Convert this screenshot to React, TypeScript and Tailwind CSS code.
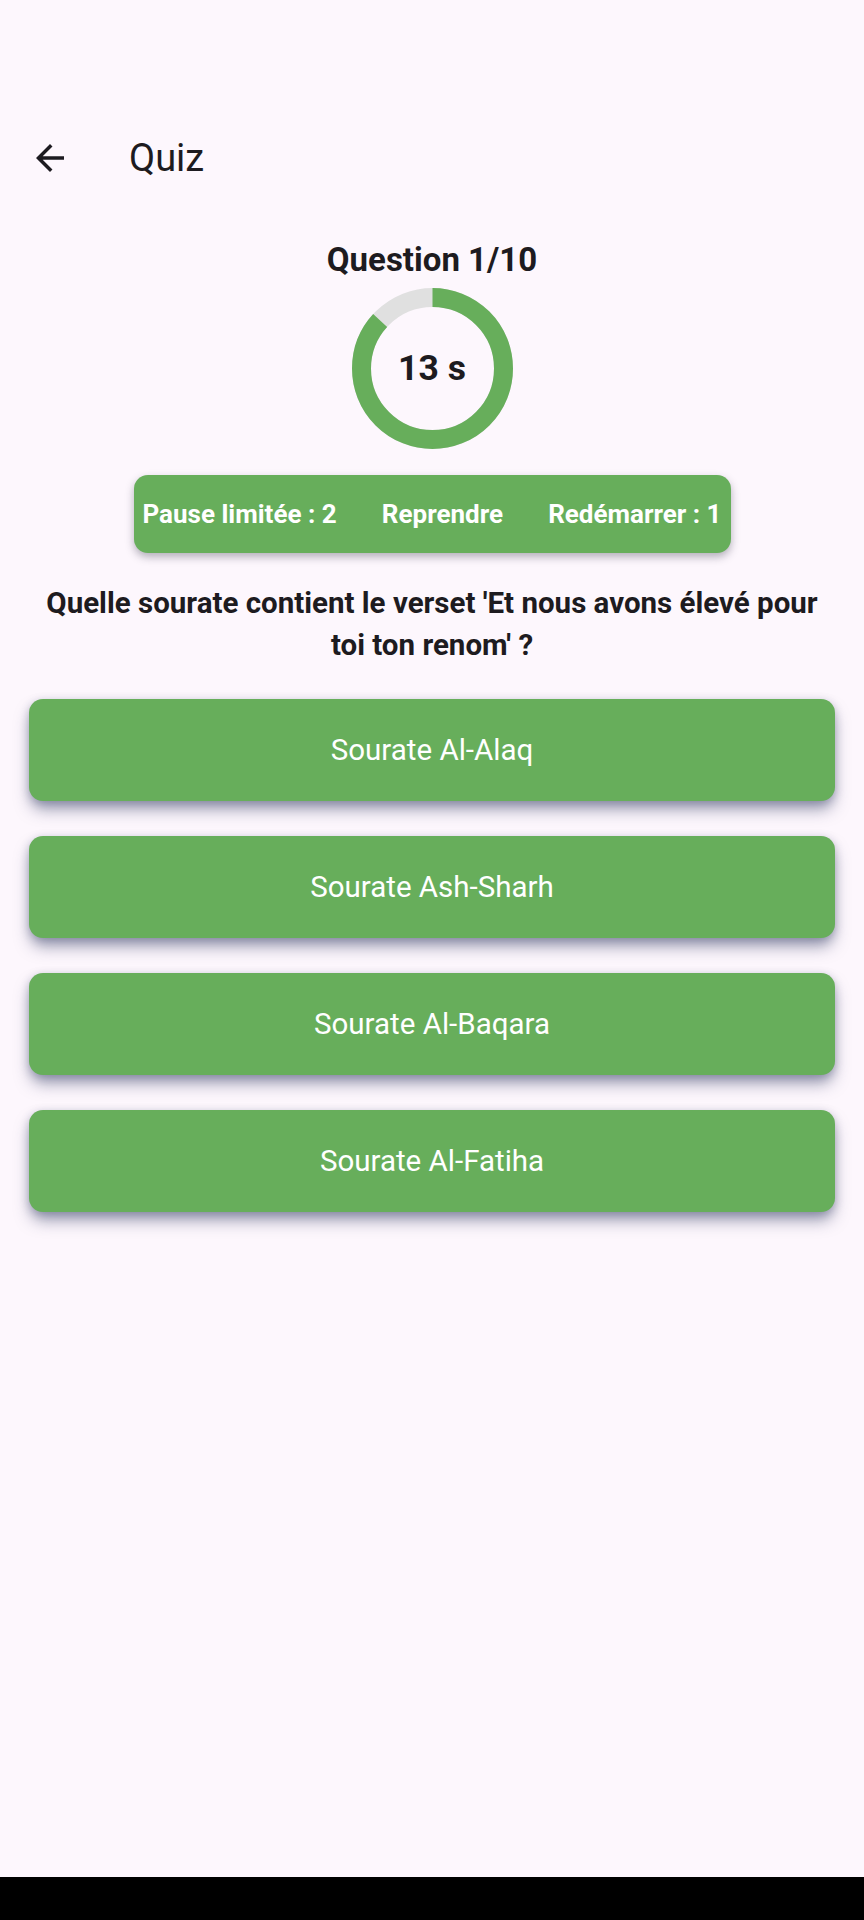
import React from "react";

const answers = [
  "Sourate Al-Alaq",
  "Sourate Ash-Sharh",
  "Sourate Al-Baqara",
  "Sourate Al-Fatiha",
];

function Timer({ remaining, total }: { remaining: number; total: number }) {
  const size = 161;
  const stroke = 19;
  const r = (size - stroke) / 2;
  const c = 2 * Math.PI * r;
  const frac = remaining / total;
  return (
    <div className="relative w-[161px] h-[161px]">
      <svg width={size} height={size} viewBox={`0 0 ${size} ${size}`}>
        <circle cx={size / 2} cy={size / 2} r={r} fill="none" stroke="#e0e0e0" strokeWidth={stroke} />
        <circle
          cx={size / 2}
          cy={size / 2}
          r={r}
          fill="none"
          stroke="#67ae5b"
          strokeWidth={stroke}
          strokeDasharray={`${c * frac} ${c}`}
          transform={`rotate(-90 ${size / 2} ${size / 2})`}
        />
      </svg>
      <div className="absolute inset-0 flex items-center justify-center text-[35.5px] font-bold text-[#1d1b20] leading-none">
        13 s
      </div>
    </div>
  );
}

export default function App() {
  return (
    <div className="w-[864px] h-[1920px] flex flex-col font-['Roboto',sans-serif] bg-[#fdf7fd]">
      <div className="flex-1 flex flex-col">
        <div className="h-[109px]" />
        <div className="h-[98px] flex items-center">
          <div className="w-[42px] h-[42px] ml-[29px]">
            <svg viewBox="0 0 24 24" width="42" height="42" fill="#1d1b20">
              <path d="M20 11H7.83l5.59-5.59L12 4l-8 8 8 8 1.41-1.41L7.83 13H20v-2z" />
            </svg>
          </div>
          <div className="ml-[58px] text-[38px] text-[#1d1b20] leading-none">Quiz</div>
        </div>
        <div className="flex flex-col items-center">
          <div className="mt-[34px] text-[33px] font-bold text-[#1d1b20] leading-[38px]">Question 1/10</div>
          <div className="mt-[9px]">
            <Timer remaining={13} total={15} />
          </div>
          <div className="mt-[26px] w-[597px] h-[78px] rounded-[14px] bg-[#67ae5b] shadow-[0_4px_8px_rgba(40,40,60,0.35)] flex items-center justify-between px-[9px] text-white font-bold text-[26px]">
            <span>Pause limitée : 2</span>
            <span>Reprendre</span>
            <span>Redémarrer : 1</span>
          </div>
        </div>
        <div className="mt-[29px] px-[29px] text-center text-[29.5px] font-bold leading-[42px] text-[#1d1b20]">
          Quelle sourate contient le verset 'Et nous avons élevé pour toi ton renom' ?
        </div>
        <div className="mt-[33px] px-[29px] flex flex-col gap-[35px]">
          {answers.map((a) => (
            <div
              key={a}
              className="h-[102px] rounded-[14px] bg-[#67ae5b] flex items-center justify-center text-white text-[29.5px] shadow-[0_10px_16px_-2px_rgba(50,60,100,0.5),0_2px_8px_rgba(50,60,100,0.25)]"
            >
              {a}
            </div>
          ))}
        </div>
      </div>
      <div className="h-[43px] bg-black" />
    </div>
  );
}
